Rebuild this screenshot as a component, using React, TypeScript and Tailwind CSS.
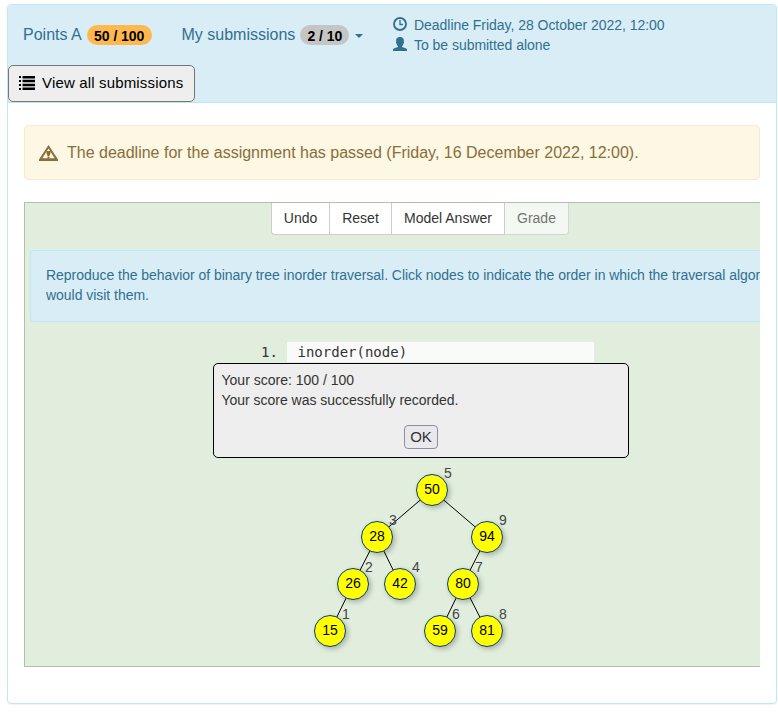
import React from "react";

const nodes = [
  { v: 50, x: 432, y: 490, o: 5 },
  { v: 28, x: 377, y: 537, o: 3 },
  { v: 94, x: 487, y: 537, o: 9 },
  { v: 26, x: 353, y: 584, o: 2 },
  { v: 42, x: 400, y: 584, o: 4 },
  { v: 80, x: 463, y: 584, o: 7 },
  { v: 15, x: 330, y: 631, o: 1 },
  { v: 59, x: 440, y: 631, o: 6 },
  { v: 81, x: 487, y: 631, o: 8 },
];

const edges = [[0, 1], [0, 2], [1, 3], [1, 4], [2, 5], [3, 6], [5, 7], [5, 8]];

// The tree canvas starts at this page coordinate.
const OX = 25;
const OY = 463;

function ListIcon() {
  return (
    <svg width="16" height="14" viewBox="0 0 16 14" fill="currentColor">
      <path d="M0 0h2v2H0zM3.500 0H16v2.500H3.500zM0 4h2v2H0zM3.500 3.800H16v2.500H3.500zM0 8h2v2H0zM3.500 7.700H16v2.500H3.500zM0 12h2v2H0zM3.500 11.500H16V14H3.500z" />
    </svg>
  );
}

function ClockIcon() {
  return (
    <svg width="14" height="14" viewBox="0 0 14 14" fill="none" stroke="currentColor">
      <circle cx="7" cy="7" r="6" strokeWidth="1.900" />
      <path d="M7 3v4.500h3" strokeWidth="1.300" />
    </svg>
  );
}

function UserIcon() {
  return (
    <svg width="14" height="14" viewBox="0 0 14 14" fill="currentColor">
      <path d="M7 0C4.400 0 3.100 1.300 3.100 3.400c0 .8.100 1.300.2 1.700-.4.200-.3 1.100.2 1.600.3 1.100.8 1.900 1.500 2.500v.9L1.200 11.200C.4 11.600 0 12.100 0 12.800V14h14v-1.200c0-.7-.4-1.200-1.200-1.600L9 10.100v-.9c.7-.6 1.200-1.400 1.500-2.500.5-.5.600-1.400.2-1.600.1-.4.200-.9.200-1.700C10.900 1.300 9.600 0 7 0z" />
    </svg>
  );
}

function WarningIcon() {
  return (
    <svg width="19" height="16" viewBox="0 0 19 16" fill="currentColor">
      <path fillRule="evenodd" d="M9.500 0L19 14.500V16H0v-1.500zM9.500 3.500L3.300 13.300h12.400z" />
      <path d="M7.500 6h4v2.200l-1.100 2.800H8.600L7.500 8.200zM8.500 11.600h2v1.900h-2z" />
    </svg>
  );
}

function Tree() {
  return (
    <div className="relative h-[203px] w-[735px] text-sm leading-5">
      <svg className="absolute inset-0" width="735" height="203" stroke="#000" strokeWidth="1">
        {edges.map(([a, b]) => (
          <line
            key={`${a}-${b}`}
            x1={nodes[a].x - OX}
            y1={nodes[a].y - OY}
            x2={nodes[b].x - OX}
            y2={nodes[b].y - OY}
          />
        ))}
      </svg>
      {nodes.map((n) => (
        <React.Fragment key={n.v}>
          <div
            className="absolute flex size-8 items-center justify-center rounded-full border border-[#004080] bg-[#ff0] pb-0.5 text-black shadow-[2px_2px_5px_rgba(0,0,0,0.25)]"
            style={{ left: n.x - OX - 16, top: n.y - OY - 16 }}
          >
            <span>{n.v}</span>
          </div>
          <span className="absolute text-[#444]" style={{ left: n.x - OX + 12, top: n.y - OY - 27 }}>
            {n.o}
          </span>
        </React.Fragment>
      ))}
    </div>
  );
}

export default function App() {
  return (
    <div className="h-[714px] w-[778px] overflow-hidden bg-white pt-1 pl-[7px] font-['Liberation_Sans',Arial,sans-serif] text-base text-[#333]">
      <div className="h-[700px] w-[770px] rounded border border-[#bce8f1] shadow-[0_1px_1px_rgba(0,0,0,0.05)]">
        <header className="h-[98px] rounded-t-[3px] border-b border-[#bce8f1] bg-[#d9edf7] text-[#31708f]">
          <div className="flex h-[60px] items-start pl-[15px]">
            <div className="flex w-[158.500px] items-center gap-[5px] pt-[18px] leading-6">
              <span>Points A</span>
              <span className="flex h-5 w-[65px] items-center justify-center rounded-[10px] bg-[#ffb84d] pt-px text-sm font-bold tracking-[-0.05px] text-black">50 / 100</span>
            </div>
            <div className="flex w-[211.500px] items-center gap-[5px] pt-[18px] leading-6">
              <span>My submissions</span>
              <span className="flex h-5 w-[49px] items-center justify-center rounded-[10px] bg-[#c5c5c5] pt-px text-sm font-bold tracking-[-0.05px] text-black">2 / 10</span>
              <span className="mt-0.5 ml-px border-x-4 border-t-4 border-x-transparent border-t-[#31708f]" />
            </div>
            <div className="flex flex-col pt-[10px] text-sm leading-5">
              <div className="flex items-center gap-[7px]">
                <span className="-mt-0.5"><ClockIcon /></span>
                <span className="tracking-[-0.035px]">Deadline Friday, 28 October 2022, 12:00</span>
              </div>
              <div className="flex items-center gap-[7px]">
                <span className="-mt-0.5"><UserIcon /></span>
                <span className="tracking-[-0.035px]">To be submitted alone</span>
              </div>
            </div>
          </div>
          <button className="flex h-[37px] w-[187px] items-center gap-[7px] rounded-[5px] border border-[#767676] bg-[#eee] pl-[10px] text-[15px] text-black">
            <span className="-mt-0.5"><ListIcon /></span>
            <span className="tracking-[0.16px] whitespace-nowrap">View all submissions</span>
          </button>
        </header>

        <main className="pt-[22px] pl-4">
          <div className="flex h-[55px] w-[736px] items-center gap-[9px] rounded border border-[#faebcc] bg-[#fcf8e3] pl-[14px] text-[#8a6d3b]">
            <WarningIcon />
            <span>The deadline for the assignment has passed (Friday, 16 December 2022, 12:00).</span>
          </div>

          <section className="mt-[22px] h-[465px] w-[736px] overflow-hidden border-y border-l border-[#b3bfaf] bg-[#e1eddd]">
            <div className="ml-[246px] flex h-8 text-sm leading-5">
              <button className="w-[59px] rounded-bl border-x border-b border-[#ccc] bg-white pb-0.5">Undo</button>
              <button className="w-[62px] border-r border-b border-[#ccc] bg-white pb-0.5">Reset</button>
              <button className="w-[113px] border-r border-b border-[#ccc] bg-white pb-0.5">Model Answer</button>
              <button className="w-16 rounded-br border-r border-b border-[#ccc] bg-white pb-0.5 opacity-65">Grade</button>
            </div>
            <div className="mt-[15px] ml-[5px] h-[72px] w-[800px] rounded border border-[#bce8f1] bg-[#d9edf7] px-[15px] pt-[14px] text-sm leading-5 tracking-[-0.035px] whitespace-nowrap text-[#31708f]">
              Reproduce the behavior of binary tree inorder traversal. Click nodes to indicate the order in which the traversal algorithm<br />
              would visit them.
            </div>

            <div className="relative mt-5 h-[121px]">
              <div className="flex h-5 pl-[236px] font-['DejaVu_Sans_Mono',monospace] text-sm leading-5">
                <span className="w-[26px]">1.</span>
                <span className="w-[307px] bg-[#fafafa] pl-[10.500px]">inorder(node)</span>
              </div>
              <div className="absolute top-[21px] left-[188px] flex h-[95px] w-[416px] flex-col rounded-[5px] border border-black bg-[#eee] px-[7.500px] pt-[6px] text-sm leading-5">
                <span>Your score: 100 / 100</span>
                <span className="tracking-[-0.02px]">Your score was successfully recorded.</span>
                <button className="mt-[15px] h-6 w-[34px] self-center rounded border border-[#8f8f9d] bg-[#e9e9ed] text-[15px] leading-5">OK</button>
              </div>
            </div>
            <Tree />
          </section>
        </main>
      </div>
    </div>
  );
}
